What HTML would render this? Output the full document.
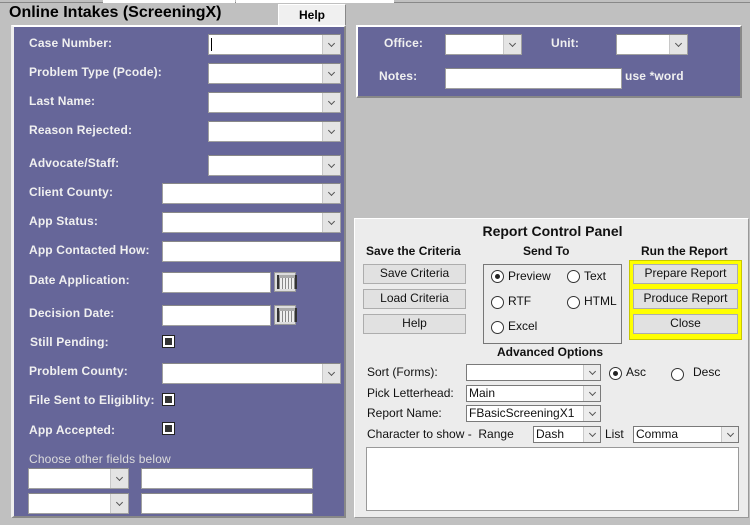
<!DOCTYPE html>
<html><head><style>
*{box-sizing:border-box;margin:0;padding:0}
body{width:750px;height:525px;background:#c0c0c0;font-family:"Liberation Sans",Arial,sans-serif;position:relative;overflow:hidden}
.a{position:absolute}
.lbl{position:absolute;color:#f0f0f0;font-weight:bold;font-size:12px;white-space:nowrap;letter-spacing:0.15px}
.in{position:absolute;background:#fff;border:1px solid #a0a0a0;border-top-color:#888}
.dd{position:absolute;right:0;top:0;bottom:0;width:18px;background:#e4e4e4;border-left:1px solid #c8c8c8}
.dd:after{content:"";position:absolute;left:6px;top:6px;width:4px;height:4px;border-right:1px solid #555;border-bottom:1px solid #555;transform:rotate(45deg)}
.cb{position:absolute;width:13px;height:13px;background:#fff;border:1px solid #222;}
.cb:after{content:"";position:absolute;left:2px;top:2px;width:7px;height:7px;background:#333}
.cal{position:absolute;width:22px;height:20px;background:#ddd;border:1px solid #999}
.cal:before{content:"";position:absolute;left:2px;top:2px;width:16px;height:14px;border-left:2px solid #333;border-right:2px solid #333;background:linear-gradient(#aaa 0 3px,transparent 3px),repeating-linear-gradient(90deg,#888 0 1px,#eee 1px 3px)}
.btn{position:absolute;background:#e1e1e1;border:1px solid #adadad;font-size:12px;text-align:center;line-height:17px;color:#111}
.t{position:absolute;font-size:12px;color:#111;white-space:nowrap}
.b{font-weight:bold}
.r{position:absolute;width:13px;height:13px;border-radius:50%;background:#fff;border:1px solid #333}
.r.on:after{content:"";position:absolute;left:3px;top:3px;width:5px;height:5px;border-radius:50%;background:#222}
.sm{position:absolute;background:#fff;border:1px solid #7a7a7a;font-size:12px;line-height:15px;padding-left:2px;color:#111;white-space:nowrap;overflow:hidden}
.sm .dd{width:17px;background:#ececec}
.sm .dd:after{top:4px}
</style></head><body>
<div class="a" style="left:0;top:0;width:750px;height:3px;border-bottom:1px solid #888;background:#c0c0c0"></div>
<div class="a" style="left:103px;top:0;width:132px;height:3px;background:#fff"></div>
<div class="a" style="left:236px;top:0;width:158px;height:3px;background:#fff"></div>
<div class="t b" style="left:9px;top:4px;font-size:16px;color:#000">Online Intakes (ScreeningX)</div>
<div class="a" style="left:278px;top:4px;width:68px;height:22px;background:#f0f0f0;border:1px solid #888;border-top-color:#fff;border-left-color:#fff;font-weight:bold;font-size:12px;text-align:center;line-height:20px">Help</div>

<div class="a" style="left:11px;top:25px;width:335px;height:493px;background:#666699;border:2px solid #fff;border-right-color:#888;border-bottom-color:#888;border-left:3px solid #eee"></div>

<div class="lbl" style="left:29px;top:36px">Case Number:</div>
<div class="in" style="left:208px;top:34px;width:133px;height:21px"><div class="a" style="left:2px;top:3px;width:1px;height:13px;background:#000"></div><div class="dd"></div></div>
<div class="lbl" style="left:29px;top:65px">Problem Type (Pcode):</div>
<div class="in" style="left:208px;top:63px;width:133px;height:21px"><div class="dd"></div></div>
<div class="lbl" style="left:29px;top:94px">Last Name:</div>
<div class="in" style="left:208px;top:92px;width:133px;height:21px"><div class="dd"></div></div>
<div class="lbl" style="left:29px;top:123px">Reason Rejected:</div>
<div class="in" style="left:208px;top:121px;width:133px;height:21px"><div class="dd"></div></div>
<div class="lbl" style="left:29px;top:156px">Advocate/Staff:</div>
<div class="in" style="left:208px;top:155px;width:133px;height:21px"><div class="dd"></div></div>
<div class="lbl" style="left:29px;top:185px">Client County:</div>
<div class="in" style="left:162px;top:183px;width:179px;height:21px"><div class="dd"></div></div>
<div class="lbl" style="left:29px;top:214px">App Status:</div>
<div class="in" style="left:162px;top:212px;width:179px;height:21px"><div class="dd"></div></div>
<div class="lbl" style="left:29px;top:243px">App Contacted How:</div>
<div class="in" style="left:162px;top:241px;width:179px;height:21px"></div>
<div class="lbl" style="left:29px;top:273px">Date Application:</div>
<div class="in" style="left:162px;top:272px;width:109px;height:21px"></div>
<div class="cal" style="left:274px;top:272px"></div>
<div class="lbl" style="left:29px;top:306px">Decision Date:</div>
<div class="in" style="left:162px;top:305px;width:109px;height:21px"></div>
<div class="cal" style="left:274px;top:305px"></div>
<div class="lbl" style="left:30px;top:335px">Still Pending:</div>
<div class="cb" style="left:162px;top:335px"></div>
<div class="lbl" style="left:29px;top:364px">Problem County:</div>
<div class="in" style="left:162px;top:363px;width:179px;height:21px"><div class="dd"></div></div>
<div class="lbl" style="left:29px;top:393px">File Sent to Eligiblity:</div>
<div class="cb" style="left:162px;top:393px"></div>
<div class="lbl" style="left:29px;top:423px">App Accepted:</div>
<div class="cb" style="left:162px;top:422px"></div>
<div class="lbl" style="left:29px;top:452px;font-weight:normal;color:#ddd">Choose other fields below</div>
<div class="in" style="left:28px;top:468px;width:101px;height:21px"><div class="dd"></div></div>
<div class="in" style="left:141px;top:468px;width:172px;height:21px"></div>
<div class="in" style="left:28px;top:493px;width:101px;height:21px"><div class="dd"></div></div>
<div class="in" style="left:141px;top:493px;width:172px;height:21px"></div>

<div class="a" style="left:356px;top:25px;width:386px;height:73px;background:#666699;border:2px solid #fff;border-right-color:#888;border-bottom-color:#888"></div>
<div class="lbl" style="left:384px;top:36px">Office:</div>
<div class="in" style="left:445px;top:34px;width:77px;height:21px"><div class="dd"></div></div>
<div class="lbl" style="left:551px;top:36px">Unit:</div>
<div class="in" style="left:616px;top:34px;width:72px;height:21px"><div class="dd"></div></div>
<div class="lbl" style="left:379px;top:69px">Notes:</div>
<div class="in" style="left:445px;top:68px;width:177px;height:21px"></div>
<div class="lbl" style="left:625px;top:69px">use *word</div>

<div class="a" style="left:354px;top:218px;width:395px;height:300px;background:#ececec;border:1px solid #fff;border-right-color:#999;border-bottom-color:#999"></div>
<div class="t b" style="left:355px;top:223px;width:395px;text-align:center;font-size:14px">Report Control Panel</div>
<div class="t b" style="left:366px;top:244px">Save the Criteria</div>
<div class="t b" style="left:523px;top:244px">Send To</div>
<div class="t b" style="left:641px;top:244px">Run the Report</div>
<div class="btn" style="left:363px;top:264px;width:103px;height:20px">Save Criteria</div>
<div class="btn" style="left:363px;top:289px;width:103px;height:20px">Load Criteria</div>
<div class="btn" style="left:363px;top:314px;width:103px;height:20px">Help</div>
<div class="a" style="left:483px;top:264px;width:139px;height:80px;border:1px solid #777"></div>
<div class="r on" style="left:491px;top:270px"></div><div class="t" style="left:508px;top:269px">Preview</div>
<div class="r" style="left:567px;top:270px"></div><div class="t" style="left:584px;top:269px">Text</div>
<div class="r" style="left:491px;top:296px"></div><div class="t" style="left:508px;top:294px">RTF</div>
<div class="r" style="left:567px;top:296px"></div><div class="t" style="left:584px;top:294px">HTML</div>
<div class="r" style="left:491px;top:321px"></div><div class="t" style="left:508px;top:319px">Excel</div>
<div class="a" style="left:629px;top:260px;width:113px;height:80px;background:#ffff00;border:1px solid #c8c800"></div>
<div class="btn" style="left:633px;top:264px;width:105px;height:20px">Prepare Report</div>
<div class="btn" style="left:633px;top:289px;width:105px;height:20px">Produce Report</div>
<div class="btn" style="left:633px;top:314px;width:105px;height:20px">Close</div>
<div class="t b" style="left:497px;top:345px">Advanced Options</div>
<div class="t" style="left:367px;top:365px">Sort (Forms):</div>
<div class="sm" style="left:466px;top:364px;width:135px;height:17px"><div class="dd"></div></div>
<div class="r on" style="left:609px;top:367px"></div><div class="t" style="left:626px;top:365px">Asc</div>
<div class="r" style="left:671px;top:368px"></div><div class="t" style="left:693px;top:365px">Desc</div>
<div class="t" style="left:367px;top:386px">Pick Letterhead:</div>
<div class="sm" style="left:466px;top:385px;width:135px;height:17px">Main<div class="dd"></div></div>
<div class="t" style="left:367px;top:406px">Report Name:</div>
<div class="sm" style="left:466px;top:405px;width:135px;height:17px">FBasicScreeningX1<div class="dd"></div></div>
<div class="t" style="left:367px;top:427px">Character to show -&nbsp;&nbsp;Range</div>
<div class="sm" style="left:533px;top:426px;width:68px;height:17px">Dash<div class="dd"></div></div>
<div class="t" style="left:605px;top:427px">List</div>
<div class="sm" style="left:633px;top:426px;width:106px;height:17px">Comma<div class="dd"></div></div>
<div class="a" style="left:366px;top:447px;width:373px;height:64px;background:#fff;border:1px solid #999"></div>
</body></html>
